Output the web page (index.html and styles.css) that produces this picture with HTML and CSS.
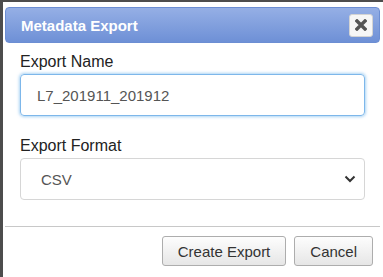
FILE: index.html
```html
<!DOCTYPE html>
<html lang="en">
<head>
<meta charset="utf-8"/>
<title>Metadata Export</title>
<link rel="stylesheet" href="styles.css">
</head>
<body>
<div class="dialog">
  <div class="titlebar">
    <span class="title">Metadata Export</span>
    <button class="close" title="Close">
      <svg width="12" height="12" viewBox="0 0 12 12"><path d="M2 2 L10 10 M10 2 L2 10" stroke="#555" stroke-width="3.4" stroke-linecap="square"/></svg>
    </button>
  </div>
  <div class="content">
    <div class="field">
      <label class="label">Export Name</label>
      <div class="input focused">L7_201911_201912</div>
    </div>
    <div class="field">
      <label class="label">Export Format</label>
      <div class="input select">
        <span>CSV</span>
        <svg width="12" height="8" viewBox="0 0 12 8"><path d="M1.5 1.5 L6 6 L10.5 1.5" fill="none" stroke="#333" stroke-width="2"/></svg>
      </div>
    </div>
  </div>
  <div class="buttons">
    <button class="btn">Create Export</button>
    <button class="btn">Cancel</button>
  </div>
</div>
</body>
</html>
```

FILE: styles.css
```css
body {
  margin: 0;
  background: #4d4d4d;
  font-family: "Liberation Sans", Arial, sans-serif;
  height: 277px;
  overflow: hidden;
}
.dialog {
  background: #fff;
  margin: 2px 0 0 3px;
  padding: 5px 3px 0 2px;
  height: 280px;
}
.titlebar {
  display: flex;
  align-items: center;
  justify-content: space-between;
  height: 34px;
  padding: 0 6px 0 15px;
  background: linear-gradient(to bottom, #95afe5, #6e90d6);
  border: 1px solid #6c8ed3;
  border-radius: 4px;
}
.title {
  color: #fff;
  font-weight: bold;
  font-size: 15px;
}
.close {
  width: 24px;
  height: 23px;
  padding: 0;
  display: flex;
  align-items: center;
  justify-content: center;
  background: #f6f6f6;
  border: 1px solid #d3d3d3;
  border-radius: 3px;
}
.content {
  padding: 10px 15px 26px 15px;
  border-bottom: 1px solid #c8c8c8;
}
.field {
  margin-bottom: 21px;
}
.field:last-child {
  margin-bottom: 0;
}
.label {
  display: block;
  font-size: 16px;
  color: #222;
  margin-bottom: 3px;
}
.input {
  height: 40px;
  box-sizing: border-box;
  border: 1px solid #ccc;
  border-radius: 4px;
  padding: 0 16px;
  display: flex;
  align-items: center;
  font-size: 15px;
  color: #555;
}
.focused {
  height: 42px;
  border-color: #7db7ea;
  box-shadow: 0 0 3px 1px rgba(102, 175, 233, 0.55);
}
.select {
  justify-content: space-between;
  padding: 0 8px 0 20px;
  height: 42px;
  border-color: #d6d6d6;
}
.buttons {
  display: flex;
  justify-content: flex-end;
  gap: 8px;
  padding: 9px 7px 0 0;
}
.btn {
  font-family: "Liberation Sans", Arial, sans-serif;
  font-size: 15px;
  color: #333;
  height: 30px;
  padding: 0 15px;
  background: linear-gradient(to bottom, #fdfdfd, #e6e6e6);
  border: 1px solid #adadad;
  border-radius: 3px;
}
```
